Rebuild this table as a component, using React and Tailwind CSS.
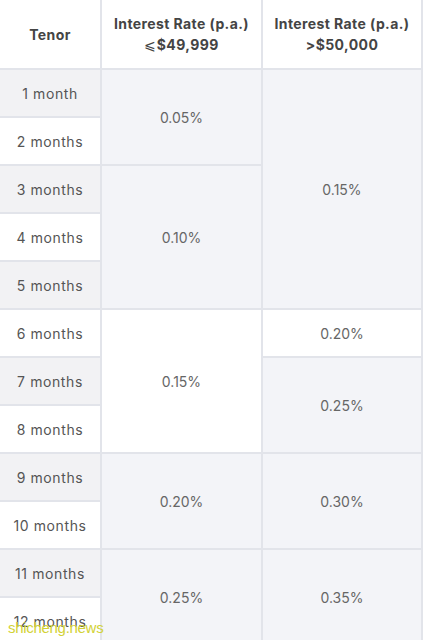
const rows = [
  "1 month",
  "2 months",
  "3 months",
  "4 months",
  "5 months",
  "6 months",
  "7 months",
  "8 months",
  "9 months",
  "10 months",
  "11 months",
  "12 months",
];

// rate blocks: [value, startRow, span, shaded]
const lowRates = [
  ["0.05%", 2, 2, true],
  ["0.10%", 4, 3, true],
  ["0.15%", 7, 3, false],
  ["0.20%", 10, 2, true],
  ["0.25%", 12, 2, true],
];

const highRates = [
  ["0.15%", 2, 5, true],
  ["0.20%", 7, 1, false],
  ["0.25%", 8, 2, true],
  ["0.30%", 10, 2, true],
  ["0.35%", 12, 2, true],
];

const rowStart = {
  2: "row-start-2",
  4: "row-start-4",
  7: "row-start-7",
  8: "row-start-8",
  10: "row-start-10",
  12: "row-start-12",
};

const rowSpan = {
  1: "row-span-1",
  2: "row-span-2",
  3: "row-span-3",
  5: "row-span-5",
};

function RateCell({ value, start, span, shaded, column }) {
  return (
    <div
      className={`${column} ${rowStart[start]} ${rowSpan[span]} flex items-center justify-center pt-[1px] text-[14px] text-[#666] ${
        shaded ? "bg-[#f3f4f8]" : "bg-white"
      }`}
    >
      {value}
    </div>
  );
}

function App() {
  return (
    <div
      className="relative h-[640px] w-[423px] overflow-hidden bg-white"
      style={{ fontFamily: "Inter, 'Noto Sans', sans-serif" }}
    >
      <div className="grid grid-cols-[100px_159px_158px] grid-rows-[68px_repeat(12,46px)] gap-[2px] bg-[#e2e4ea] pr-[2px] pb-[2px]">
        <div className="col-start-1 row-start-1 flex items-center justify-center bg-white text-[14px] font-bold tracking-[0.4px] text-[#444]">
          Tenor
        </div>
        <div className="col-start-2 row-start-1 flex flex-col items-center justify-center bg-white text-[14px] font-bold leading-[21px] tracking-[0.4px] text-[#444]">
          <span>Interest Rate (p.a.)</span>
          <span>
            <span className="font-normal">⩽</span>$49,999
          </span>
        </div>
        <div className="col-start-3 row-start-1 flex flex-col items-center justify-center bg-white text-[14px] font-bold leading-[21px] tracking-[0.4px] text-[#444]">
          <span>Interest Rate (p.a.)</span>
          <span>&gt;$50,000</span>
        </div>

        {rows.map((label, index) => (
          <div
            key={label}
            className={`col-start-1 flex items-center justify-center pt-[1px] text-[14px] tracking-[0.6px] text-[#555] ${
              index % 2 === 0 ? "bg-[#f2f2f4]" : "bg-white"
            }`}
          >
            {label}
          </div>
        ))}

        {lowRates.map(([value, start, span, shaded]) => (
          <RateCell
            key={`low-${value}`}
            column="col-start-2"
            value={value}
            start={start}
            span={span}
            shaded={shaded}
          />
        ))}

        {highRates.map(([value, start, span, shaded]) => (
          <RateCell
            key={`high-${value}`}
            column="col-start-3"
            value={value}
            start={start}
            span={span}
            shaded={shaded}
          />
        ))}
      </div>

      <span
        className="absolute bottom-[1px] left-[8px] text-[15px] tracking-[-0.3px] text-[#d2d236]"
        style={{ fontFamily: "'Liberation Sans', sans-serif" }}
      >
        shicheng.news
      </span>
    </div>
  );
}

export default App;
